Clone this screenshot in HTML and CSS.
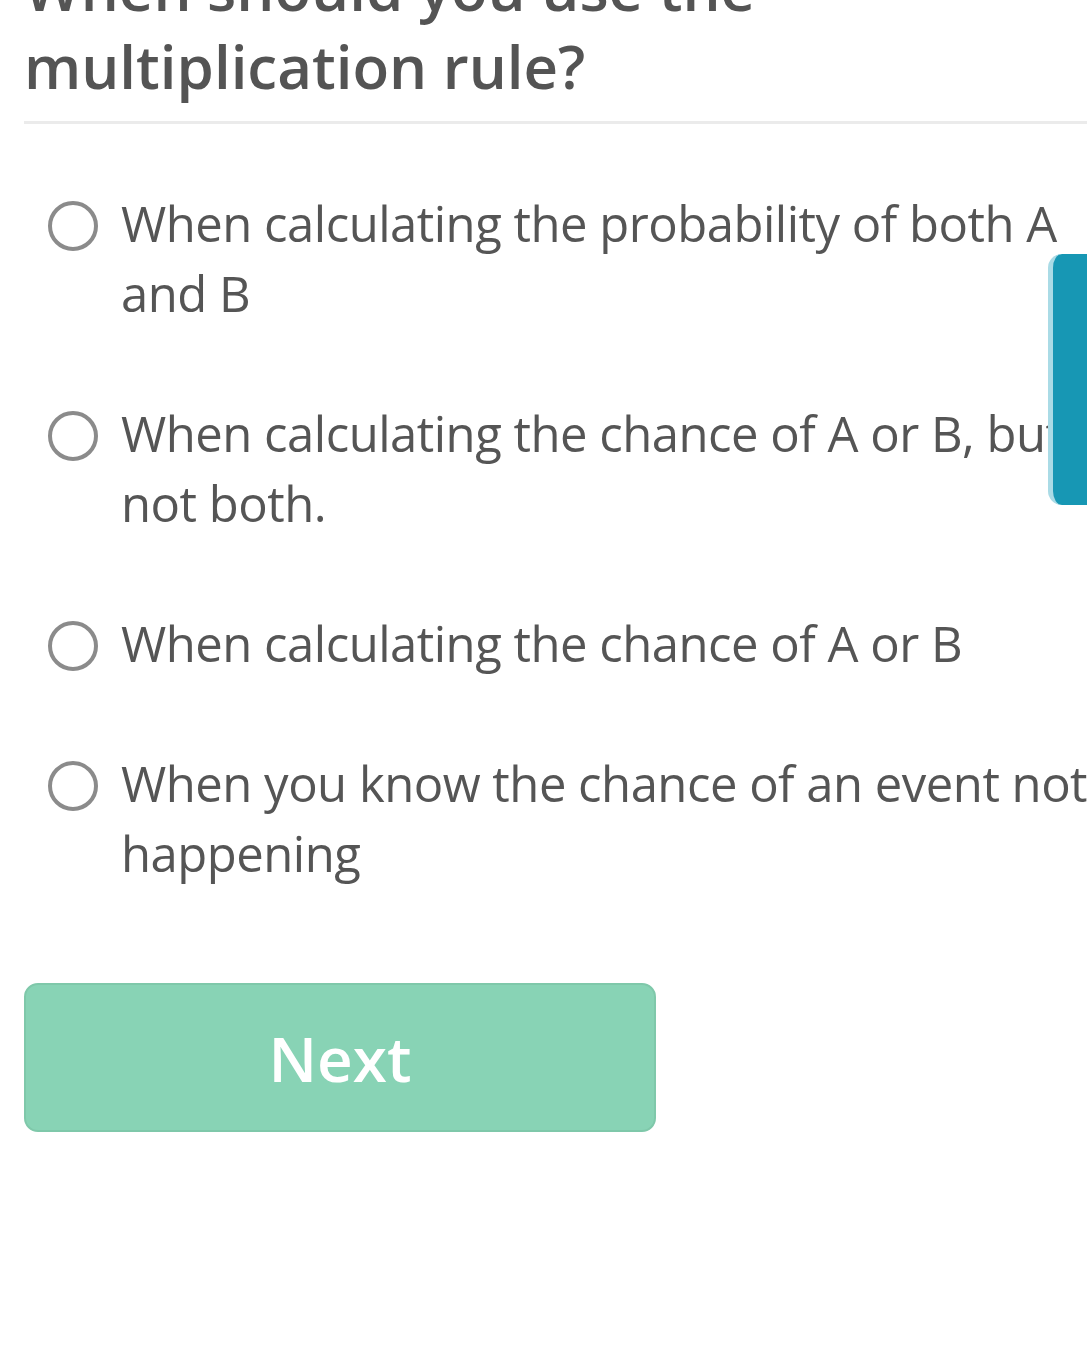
FILE: index.html
```html
<!DOCTYPE html>
<html lang="en">
<head>
<meta charset="utf-8">
<title>Quiz</title>
<link rel="stylesheet" href="styles.css">
</head>
<body>
<main class="quiz">
  <h1 class="question">When should you use the multiplication rule?</h1>
  <hr class="divider">
  <ul class="options">
    <li class="option"><span class="radio"></span><span class="label">When calculating the probability of both A and B</span></li>
    <li class="option"><span class="radio"></span><span class="label">When calculating the chance of A or B, but not both.</span></li>
    <li class="option"><span class="radio"></span><span class="label">When calculating the chance of A or B</span></li>
    <li class="option"><span class="radio"></span><span class="label">When you know the chance of an event not happening</span></li>
  </ul>
  <button class="next" type="button">Next</button>
</main>
<div class="side-tab"></div>
</body>
</html>
```
FILE: styles.css
```css
html, body {
  margin: 0;
  padding: 0;
  overflow: hidden;
  background: #ffffff;
}
body {
  width: 1087px;
  height: 1354px;
  position: relative;
  font-family: "Open Sans", "Liberation Sans", sans-serif;
  color: #555555;
}
.quiz {
  width: 1130px;
  padding-left: 24px;
}
.question {
  margin: -51px 0 0 0;
  width: 900px;
  font-size: 60px;
  line-height: 78px;
  font-weight: 600;
  color: #545454;
}
.divider {
  margin: 16px 0 0 0;
  border: 0;
  height: 3px;
  background: #ebebeb;
}
.options {
  list-style: none;
  margin: 64px 0 0 0;
  padding: 0 0 0 24px;
  display: flex;
  flex-direction: column;
  gap: 70px;
}
.option {
  display: flex;
  align-items: flex-start;
  gap: 23px;
}
.radio {
  flex: none;
  width: 42px;
  height: 42px;
  margin-top: 13px;
  border: 4px solid #8b8b8b;
  border-radius: 50%;
}
.label {
  width: 995px;
  font-size: 49px;
  letter-spacing: -0.5px;
  line-height: 70px;
  font-weight: 400;
  color: #555555;
}
.next {
  display: block;
  margin-top: 95px;
  width: 632px;
  height: 149px;
  background: #88d3b5;
  border: 2px solid #7fc8aa;
  border-radius: 14px;
  color: #ffffff;
  font-family: "Open Sans", "Liberation Sans", sans-serif;
  font-size: 62px;
  font-weight: 600;
  padding: 0;
}
.side-tab {
  position: absolute;
  top: 254px;
  right: -14px;
  width: 48px;
  height: 251px;
  background: #1797b4;
  border-left: 5px solid #aadbe6;
  border-radius: 14px 0 0 14px;
}
```
